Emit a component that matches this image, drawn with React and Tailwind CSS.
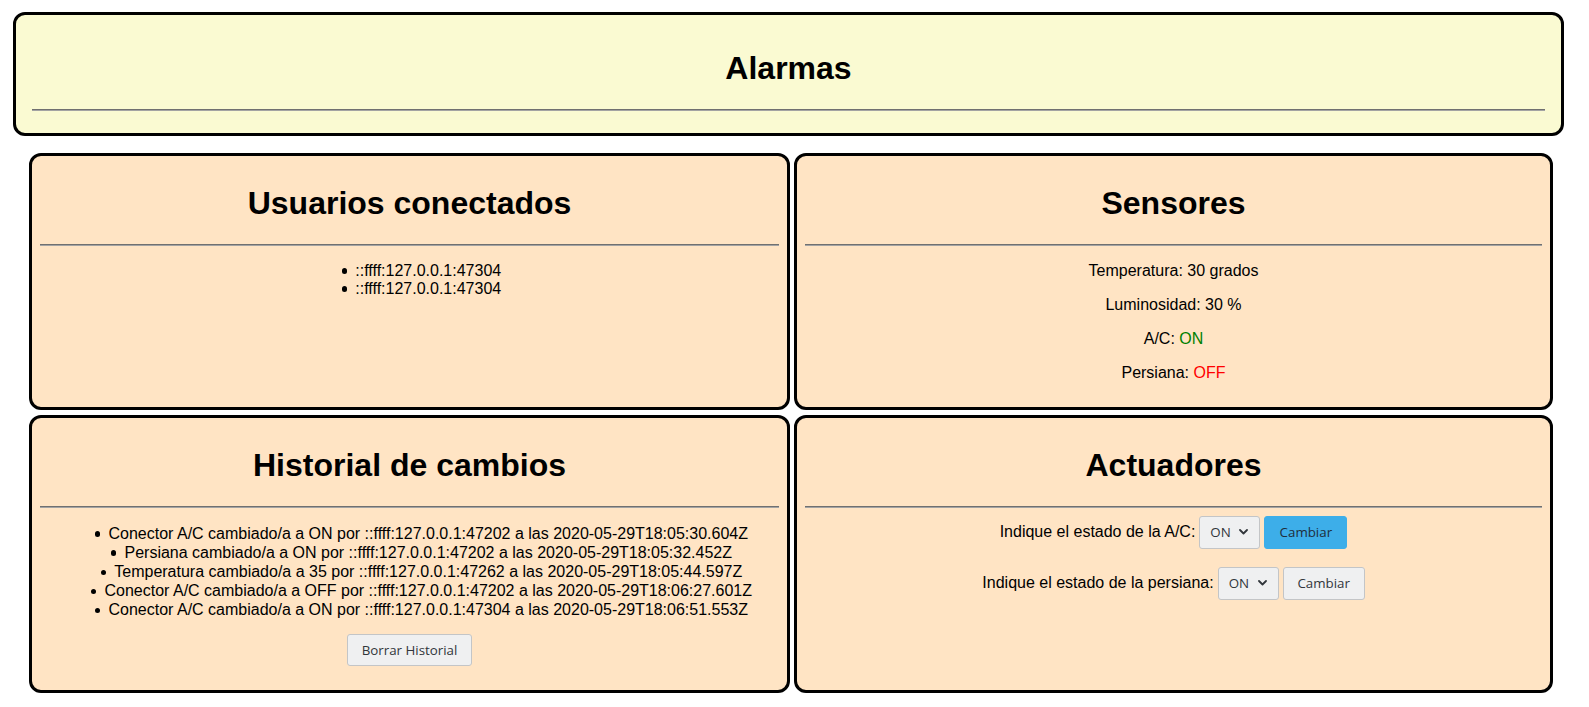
import React from "react";

const hrCls = "my-[8px] border-t border-t-[#707070] border-b border-b-[#a3a3a3]";
const btnFont = { fontFamily: '"Open Sans", "Noto Sans", sans-serif' };

function Card({ title, children }) {
  return (
    <div className="bg-[#ffe4c4] border-[3px] border-black rounded-[12px] px-[8px] py-[8px]">
      <h1 className="text-[32px] font-bold text-center my-[21.44px] text-black">{title}</h1>
      <hr className={hrCls} />
      {children}
    </div>
  );
}

function Chevron() {
  return (
    <svg width="9" height="6" viewBox="0 0 9 6" className="absolute right-[12px] top-[13px] pointer-events-none">
      <path d="M1 1 L4.5 4.5 L8 1" fill="none" stroke="#31363b" strokeWidth="1.8" strokeLinecap="round" strokeLinejoin="round" />
    </svg>
  );
}

function Select() {
  return (
    <span className="relative inline-flex">
      <select
        defaultValue="ON"
        style={btnFont}
        className="appearance-none w-[61px] h-[33px] pl-[10px] text-[13.33px] text-[#31363b] bg-[#eff0f1] border border-[#c3c5c7] rounded-[3px] outline-none"
      >
        <option>ON</option>
        <option>OFF</option>
      </select>
      <Chevron />
    </span>
  );
}

function Item({ children, className = "" }) {
  return (
    <li className={"list-none " + className}>
      <span className="inline-block w-[5.5px] h-[5.5px] rounded-full bg-black mr-[8px] align-[2px]"></span>
      {children}
    </li>
  );
}

export default function App() {
  const history = [
    "Conector A/C cambiado/a a ON por ::ffff:127.0.0.1:47202 a las 2020-05-29T18:05:30.604Z",
    "Persiana cambiado/a a ON por ::ffff:127.0.0.1:47202 a las 2020-05-29T18:05:32.452Z",
    "Temperatura cambiado/a a 35 por ::ffff:127.0.0.1:47262 a las 2020-05-29T18:05:44.597Z",
    "Conector A/C cambiado/a a OFF por ::ffff:127.0.0.1:47202 a las 2020-05-29T18:06:27.601Z",
    "Conector A/C cambiado/a a ON por ::ffff:127.0.0.1:47304 a las 2020-05-29T18:06:51.553Z",
  ];
  return (
    <div
      className="bg-white text-black leading-[normal] text-[16px] pt-[12px] min-h-[707px]"
      style={{ fontFamily: '"Liberation Sans", Arial, sans-serif' }}
    >
      <div className="ml-[13px] w-[1551px] bg-[#fafad2] border-[3px] border-black rounded-[12px] px-[16px] py-[14px]">
        <h1 className="text-[32px] font-bold text-center my-[21.44px]">Alarmas</h1>
        <hr className={hrCls} />
      </div>

      <div className="ml-[29px] mt-[17px] grid grid-cols-[761px_759px] gap-x-[4px] gap-y-[5px]">
        <Card title="Usuarios conectados">
          <ul className="text-center my-[16px] pl-[24px]">
            <Item>::ffff:127.0.0.1:47304</Item>
            <Item>::ffff:127.0.0.1:47304</Item>
          </ul>
        </Card>

        <Card title="Sensores">
          <p className="text-center my-[16px]">Temperatura: 30 grados</p>
          <p className="text-center my-[16px]">Luminosidad: 30 %</p>
          <p className="text-center my-[16px]">
            A/C: <span className="text-[#008000]">ON</span>
          </p>
          <p className="text-center mt-[16px] mb-[17px]">
            Persiana: <span className="text-[#ff0000]">OFF</span>
          </p>
        </Card>

        <Card title="Historial de cambios">
          <ul className="text-center mt-[16px] mb-0 pl-[24px]">
            {history.map((h, i) => (
              <Item key={i} className="leading-[19.2px]">
                {h}
              </Item>
            ))}
          </ul>
          <div className="flex justify-center mt-[14.6px] mb-[16px]">
            <button
              style={btnFont}
              className="h-[32px] px-[14px] text-[13.33px] text-[#31363b] bg-[#eff0f1] border border-[#c3c5c7] rounded-[3px]"
            >
              Borrar Historial
            </button>
          </div>
        </Card>

        <Card title="Actuadores">
          <div className="flex justify-center items-center gap-[4px]">
            <span>Indique el estado de la A/C:</span>
            <Select />
            <button
              style={btnFont}
              className="w-[83px] h-[33px] text-[13.33px] text-[#1f2d3a] bg-[#3daee9] border border-[#3daee9] rounded-[3px]"
            >
              Cambiar
            </button>
          </div>
          <div className="flex justify-center items-center gap-[4px] mt-[18px]">
            <span>Indique el estado de la persiana:</span>
            <Select />
            <button
              style={btnFont}
              className="w-[82px] h-[33px] text-[13.33px] text-[#31363b] bg-[#eff0f1] border border-[#c3c5c7] rounded-[3px]"
            >
              Cambiar
            </button>
          </div>
        </Card>
      </div>
    </div>
  );
}
